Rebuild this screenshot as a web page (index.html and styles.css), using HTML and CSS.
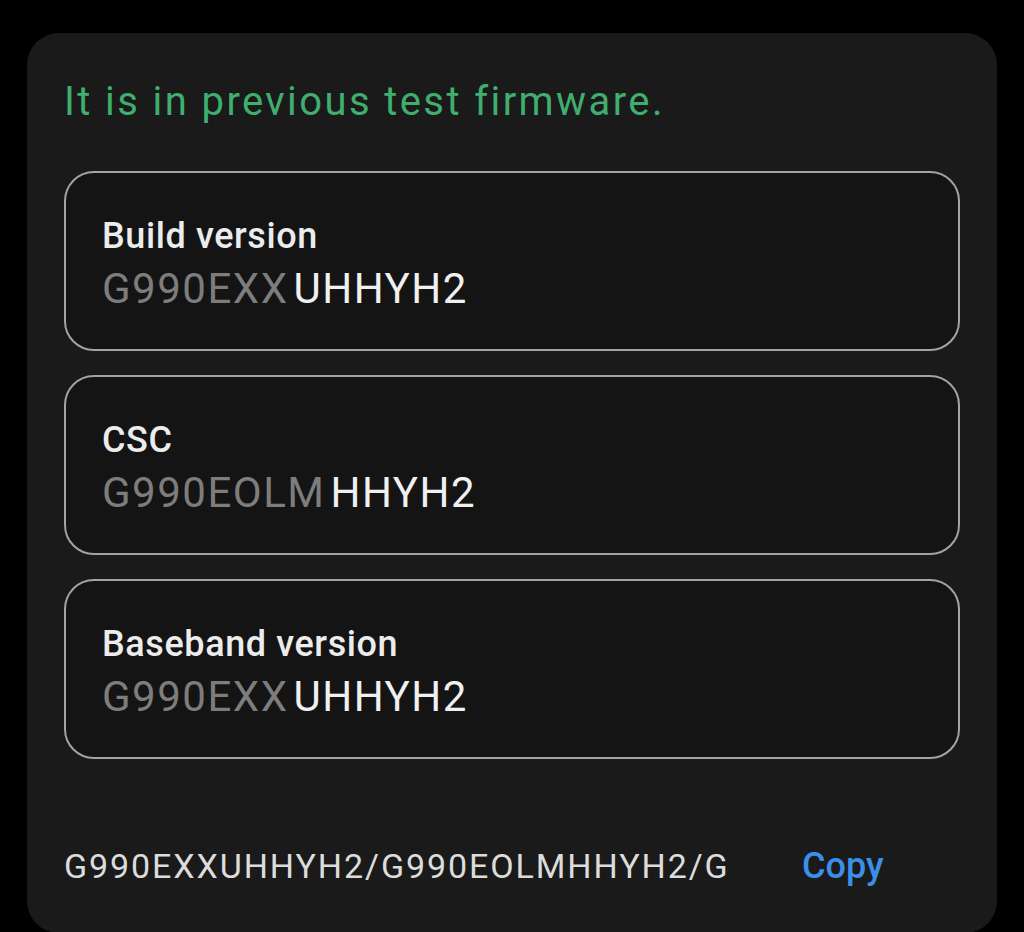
FILE: index.html
```html
<!DOCTYPE html>
<html>
<head>
<meta charset="utf-8">
<link rel="stylesheet" href="styles.css">
</head>
<body>
<div class="card">
  <p class="status">It is in previous test firmware.</p>
  <div class="box">
    <div class="label">Build version</div>
    <div class="value"><span class="dim">G990EXX</span><span class="bright">UHHYH2</span></div>
  </div>
  <div class="box">
    <div class="label">CSC</div>
    <div class="value"><span class="dim">G990EOLM</span><span class="bright">HHYH2</span></div>
  </div>
  <div class="box">
    <div class="label">Baseband version</div>
    <div class="value"><span class="dim">G990EXX</span><span class="bright">UHHYH2</span></div>
  </div>
  <div class="footer">
    <span class="full">G990EXXUHHYH2/G990EOLMHHYH2/G</span>
    <span class="copy">Copy</span>
  </div>
</div>
</body>
</html>
```
FILE: styles.css
```css
html, body {
  margin: 0;
  padding: 0;
  background: #000;
  height: 932px;
  overflow: hidden;
  font-family: Roboto, "Noto Sans", sans-serif;
}
.card {
  margin: 33px 27px 0 27px;
  background: #1a1a1a;
  border-radius: 32px;
  padding: 46px 37px 0 37px;
  height: 900px;
  box-sizing: border-box;
}
.status {
  margin: 0 0 46px 0;
  color: #3fae6e;
  font-size: 40px;
  line-height: 46px;
  letter-spacing: 2.4px;
}
.box {
  border: 2px solid #a3a3a3;
  border-radius: 30px;
  background: #141414;
  height: 180px;
  box-sizing: border-box;
  padding: 40px 36px 0 36px;
  margin-bottom: 24px;
}
.label {
  color: #ececec;
  font-weight: 500;
  font-size: 36px;
  line-height: 46px;
  letter-spacing: 0.6px;
}
.value {
  font-size: 42px;
  line-height: 60px;
  letter-spacing: 1.5px;
  display: flex;
  gap: 5px;
}
.dim { color: #7d7d7d; }
.bright { color: #f0f0f0; }
.footer {
  display: flex;
  align-items: center;
  margin-top: 86px;
  font-size: 34px;
}
.full {
  color: #dcdcdc;
  width: 738px;
  letter-spacing: 1.9px;
}
.copy {
  color: #3b8fe8;
  font-weight: 500;
  font-size: 36px;
}
```
